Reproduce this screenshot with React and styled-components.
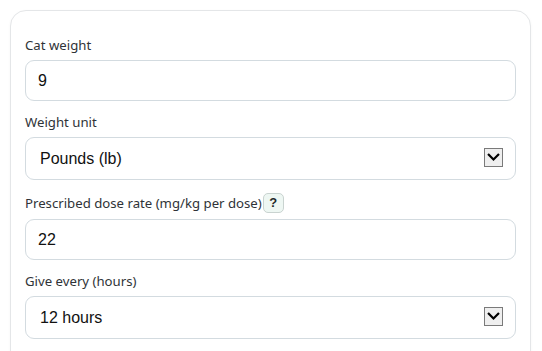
import styled, { createGlobalStyle } from 'styled-components';

const GlobalStyle = createGlobalStyle`
    html, body {
        margin: 0;
        padding: 0;
        background: #ffffff;
        overflow: hidden;
    }
    body {
        padding: 10px 0 0 10px;
        font-family: "Segoe UI", "Noto Sans", sans-serif;
    }
`

const Card = styled.div`
    width: 521px;
    box-sizing: border-box;
    min-height: 400px;
    border: 1px solid #e4e6e8;
    border-radius: 16px;
    padding: 25px 14px 0 14px;
    background: #ffffff;
    box-shadow: 0 1px 3px rgba(0, 0, 0, 0.04);
`

const Field = styled.div`
    display: flex;
    flex-direction: column;
    margin-bottom: 12px;
`

const LabelRow = styled.div`
    display: flex;
    align-items: center;
    height: ${props => props.$tall ? '21px' : '18px'};
    margin-bottom: 6px;
`

const Label = styled.label`
    font-size: 13.2px;
    line-height: 18px;
    color: #2f3337;
`

const HelpButton = styled.button`
    width: 21px;
    height: 20px;
    padding: 0;
    margin-left: 1px;
    border: 1px solid #c9d3d0;
    border-radius: 5px;
    background: #eef7f3;
    color: #1f2a2a;
    font-family: "Liberation Sans", Arial, sans-serif;
    font-size: 13px;
    font-weight: 700;
    line-height: 18px;
    cursor: pointer;
`

const TextInput = styled.input`
    box-sizing: border-box;
    width: 100%;
    height: 41px;
    padding: 0 12px;
    border: 1px solid #d3dbe0;
    border-radius: 9px;
    font-family: "Liberation Sans", Arial, sans-serif;
    font-size: 16px;
    color: #111111;
    background: #ffffff;
    outline: none;
`

const SelectWrap = styled.div`
    position: relative;
    width: 100%;
`

const Select = styled.select`
    box-sizing: border-box;
    width: 100%;
    height: 43px;
    padding: 0 40px 0 14px;
    border: 1px solid #d3dbe0;
    border-radius: 9px;
    font-family: "Liberation Sans", Arial, sans-serif;
    font-size: 16px;
    color: #111111;
    background: #ffffff;
    appearance: none;
    -webkit-appearance: none;
    outline: none;
`

const ArrowBox = styled.span`
    position: absolute;
    right: 13px;
    top: 11px;
    width: 19px;
    height: 19px;
    box-sizing: border-box;
    border: 1px solid #7a7a7a;
    background: #efefef;
    display: flex;
    align-items: center;
    justify-content: center;
    pointer-events: none;
`

function Chevron() {
    return (
        <svg width="13" height="9" viewBox="0 0 13 9">
            <path d="M1.8 1.8 L6.5 6.5 L11.2 1.8" fill="none" stroke="#000" strokeWidth="2.2" strokeLinecap="square" />
        </svg>
    );
}

function SelectField({ label, value, options }) {
    return (
        <Field>
            <LabelRow><Label>{label}</Label></LabelRow>
            <SelectWrap>
                <Select defaultValue={value}>
                    {options.map(o => <option key={o} value={o}>{o}</option>)}
                </Select>
                <ArrowBox><Chevron /></ArrowBox>
            </SelectWrap>
        </Field>
    );
}

function App() {
    return (
        <>
            <GlobalStyle />
            <Card>
                <Field>
                    <LabelRow><Label>Cat weight</Label></LabelRow>
                    <TextInput defaultValue="9" />
                </Field>
                <SelectField
                    label="Weight unit"
                    value="Pounds (lb)"
                    options={['Pounds (lb)', 'Kilograms (kg)']}
                />
                <Field>
                    <LabelRow $tall>
                        <Label>Prescribed dose rate (mg/kg per dose)</Label>
                        <HelpButton type="button">?</HelpButton>
                    </LabelRow>
                    <TextInput defaultValue="22" />
                </Field>
                <SelectField
                    label="Give every (hours)"
                    value="12 hours"
                    options={['8 hours', '12 hours', '24 hours']}
                />
            </Card>
        </>
    );
}

export default App;
